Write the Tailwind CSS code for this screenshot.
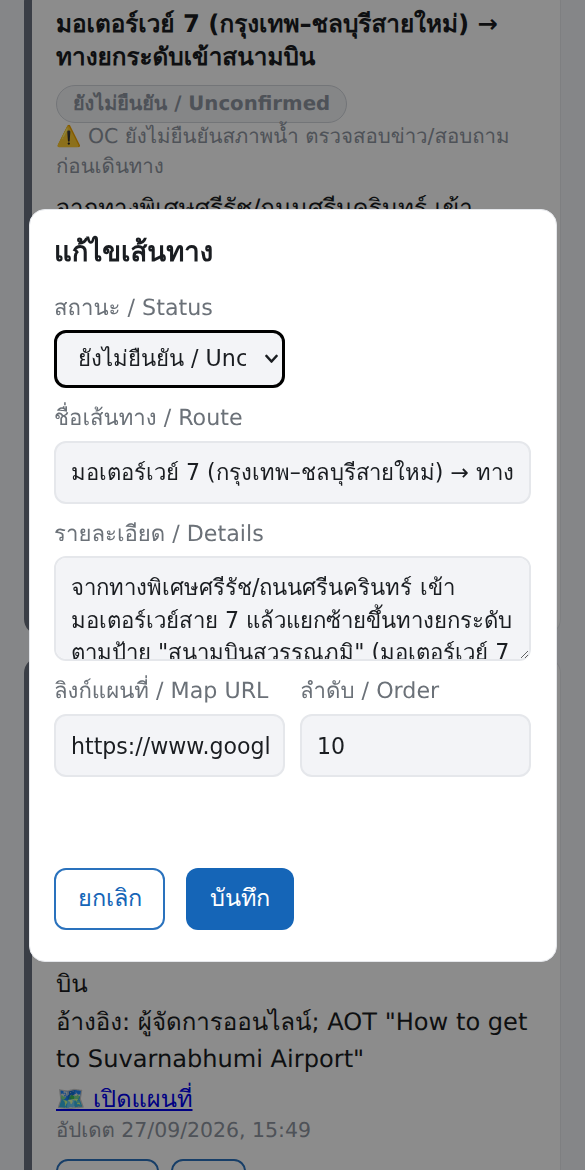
<!DOCTYPE html>
<html lang="th">
<head>
    <meta charset="UTF-8">
    <meta name="viewport" content="width=device-width, initial-scale=1.0">
    <title>แก้ไขเส้นทาง</title>
    <script src="https://cdn.jsdelivr.net/npm/@tailwindcss/browser@4"></script>
</head>
<body class="h-[1170px] overflow-hidden bg-[#f3f4f7] font-['DejaVu_Sans','Noto_Sans',sans-serif] text-[#1a1d21] [text-rendering:geometricPrecision]">
    <!-- page behind the dialog -->
    <div class="px-6 -mt-[14px]">
        <div class="h-[649px] overflow-hidden rounded-2xl border border-[#e5e7eb] border-l-8 border-l-[#6b7280] bg-white px-6 pt-5">
            <h3 class="text-[24.3px] leading-[33px] font-bold">มอเตอร์เวย์ 7 (กรุงเทพ–ชลบุรีสายใหม่) → ทางยกระดับเข้าสนามบิน</h3>
            <span class="mt-3 inline-block rounded-full border border-[#d1d5db] bg-[#f3f4f6] px-4 py-[3px] text-[19.75px] leading-[30px] font-bold text-[#8f96a1]">ยังไม่ยืนยัน / Unconfirmed</span>
            <p class="-mt-[2px] text-[20.45px] leading-[30px] text-[#8f96a1]">⚠️ OC ยังไม่ยืนยันสภาพน้ำ ตรวจสอบข่าว/สอบถามก่อนเดินทาง</p>
            <p class="mt-[10px] text-[24.1px] leading-[35px]">จากทางพิเศษศรีรัช/ถนนศรีนครินทร์ เข้า</p>
        </div>
        <div class="mt-[22px] h-[560px] overflow-hidden rounded-2xl border border-[#e5e7eb] border-l-8 border-l-[#6b7280] bg-white px-6 pt-[308px]">
            <p class="text-[24.1px] leading-[37.5px]">บิน<br>อ้างอิง: ผู้จัดการออนไลน์; AOT "How to get to Suvarnabhumi Airport"</p>
            <a href="#" class="mt-[3px] mb-[2px] inline-block text-[23.7px] leading-[34px] text-[#0000ee] underline">🗺️ เปิดแผนที่</a>
            <p class="-mt-[1px] text-[20.45px] leading-[26px] text-[#8f96a1]">อัปเดต 27/09/2026, 15:49</p>
            <div class="mt-4 flex gap-3">
                <span class="h-[60px] w-[103px] rounded-xl border-2 border-[#2a72bd]"></span>
                <span class="h-[60px] w-[75px] rounded-xl border-2 border-[#2a72bd]"></span>
            </div>
        </div>
    </div>

    <!-- dialog -->
    <div class="fixed inset-0 z-10 bg-black/45">
        <div class="absolute top-[209px] left-[29px] h-[753px] w-[528px] rounded-2xl border border-[#e5e7eb] bg-white px-6 pt-[22px]">
            <h2 class="text-[27.55px] leading-[40px] font-bold">แก้ไขเส้นทาง</h2>
            <label class="mt-[20px] block text-[22.2px] leading-[32px] text-[#6b7178]">สถานะ / Status</label>
            <div class="relative mt-[6px] w-[231px]">
                <select class="block h-[58px] w-full appearance-none rounded-xl border-[3px] border-black bg-[#f3f4f7] pr-[36px] pl-[21px] text-[22.2px]">
                    <option>ยังไม่ยืนยัน / Unconfirmed</option>
                </select>
                <svg class="pointer-events-none absolute top-[24px] right-[7px] h-[10px] w-[13px]" viewBox="0 0 13 10" fill="none" stroke="#1a1d21" stroke-width="2.6" stroke-linecap="round" stroke-linejoin="round"><path d="M1.5 2 6.5 7.5 11.5 2"/></svg>
            </div>
            <label class="mt-[14px] block text-[22.2px] leading-[32px] text-[#6b7178]">ชื่อเส้นทาง / Route</label>
            <input class="mt-[7px] block h-[63px] w-[477px] rounded-xl border-2 border-[#e5e7eb] bg-[#f3f4f7] px-[15px] text-[22.1px]" value="มอเตอร์เวย์ 7 (กรุงเทพ–ชลบุรีสายใหม่) → ทางยกระดับเข้าสนามบิน">
            <label class="mt-[14px] block text-[22.2px] leading-[32px] text-[#6b7178]">รายละเอียด / Details</label>
            <textarea class="mt-[6px] block h-[105px] w-[477px] rounded-xl border-2 border-[#e5e7eb] bg-[#f3f4f7] px-[15px] py-[13px] text-[22.2px] leading-[32.5px]">จากทางพิเศษศรีรัช/ถนนศรีนครินทร์ เข้ามอเตอร์เวย์สาย 7 แล้วแยกซ้ายขึ้นทางยกระดับตามป้าย "สนามบินสวรรณภูมิ" (มอเตอร์เวย์ 7 ช่วงเข้าสนามบิน)</textarea>
            <div class="mt-[14px] grid grid-cols-[231px_231px] gap-x-[15px]">
                <div>
                    <label class="block text-[22.2px] leading-[32px] text-[#6b7178]">ลิงก์แผนที่ / Map URL</label>
                    <input class="mt-[7px] block h-[63px] w-full rounded-xl border-2 border-[#e5e7eb] bg-[#f3f4f7] pr-[14px] pl-[15px] text-[22.1px]" value="https://www.googl">
                </div>
                <div>
                    <label class="block text-[22.2px] leading-[32px] text-[#6b7178]">ลำดับ / Order</label>
                    <input class="mt-[7px] block h-[63px] w-full rounded-xl border-2 border-[#e5e7eb] bg-[#f3f4f7] px-[15px] text-[22.1px]" value="10">
                </div>
            </div>
            <div class="mt-[91px] flex gap-[21px]">
                <button class="h-[62px] w-[111px] rounded-xl border-2 border-[#2a72bd] bg-white text-[23.5px] text-[#1565b7]">ยกเลิก</button>
                <button class="h-[62px] w-[108px] rounded-xl bg-[#1565b7] text-[23.5px] text-white">บันทึก</button>
            </div>
        </div>
    </div>
</body>
</html>
